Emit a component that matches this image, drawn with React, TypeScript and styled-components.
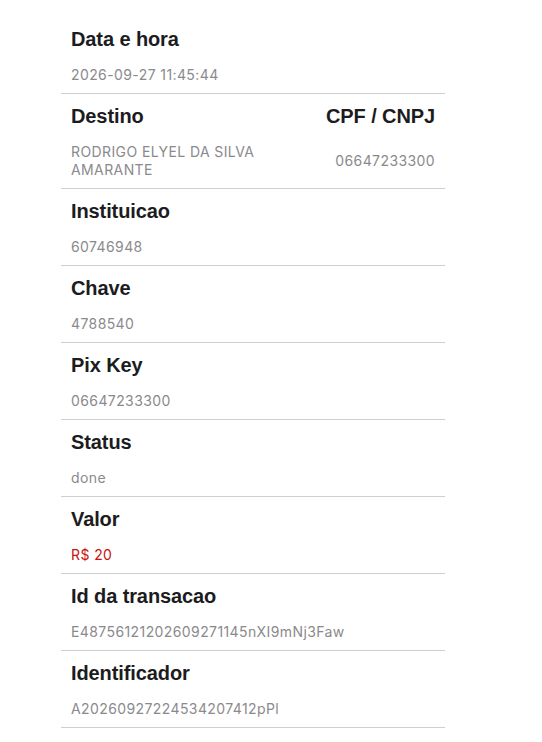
import React from "react";
import styled, { createGlobalStyle } from "styled-components";

const GlobalStyle = createGlobalStyle`
  html, body {
    margin: 0;
    padding: 0;
    background: #fff;
  }
  body {
    font-family: "Liberation Sans", Arial, sans-serif;
    -webkit-font-smoothing: antialiased;
  }
`;

const Page = styled.div`
  width: 542px;
  min-height: 742px;
  padding-top: 17px;
  box-sizing: border-box;
`;

const List = styled.div`
  width: 384px;
  margin-left: 61px;
  display: flex;
  flex-direction: column;
`;

const Section = styled.div`
  display: grid;
  grid-template-columns: 1fr auto;
  align-items: center;
  row-gap: 14px;
  padding: 9px 10px 9px 10px;
  border-bottom: 1px solid #cfcfcf;
`;

const Title = styled.div<{ $right?: boolean }>`
  font-size: 20px;
  font-weight: 700;
  color: #1c1c1e;
  line-height: 26px;
  letter-spacing: -0.1px;
  text-align: ${(p) => (p.$right ? "right" : "left")};
`;

const Value = styled.div<{ $accent?: boolean; $right?: boolean }>`
  font-family: Inter, "Liberation Sans", sans-serif;
  font-size: 14px;
  line-height: 18px;
  letter-spacing: 0.4px;
  color: ${(p) => (p.$accent ? "#c8120e" : "#8a8a8d")};
  max-width: 230px;
  text-align: ${(p) => (p.$right ? "right" : "left")};
  grid-row: 2;
`;

type Row = {
  title: string;
  value: string;
  accent?: boolean;
  right?: { title: string; value: string };
};

const ROWS: Row[] = [
  { title: "Data e hora", value: "2026-09-27 11:45:44" },
  {
    title: "Destino",
    value: "RODRIGO ELYEL DA SILVA AMARANTE",
    right: { title: "CPF / CNPJ", value: "06647233300" },
  },
  { title: "Instituicao", value: "60746948" },
  { title: "Chave", value: "4788540" },
  { title: "Pix Key", value: "06647233300" },
  { title: "Status", value: "done" },
  { title: "Valor", value: "R$ 20", accent: true },
  { title: "Id da transacao", value: "E48756121202609271145nXI9mNj3Faw" },
  { title: "Identificador", value: "A20260927224534207412pPl" },
];

export default function App() {
  return (
    <>
      <GlobalStyle />
      <Page>
        <List>
          {ROWS.map((row) => (
            <Section key={row.title}>
              <Title>{row.title}</Title>
              {row.right && <Title $right>{row.right.title}</Title>}
              <Value $accent={row.accent}>{row.value}</Value>
              {row.right && <Value $right>{row.right.value}</Value>}
            </Section>
          ))}
        </List>
      </Page>
    </>
  );
}
